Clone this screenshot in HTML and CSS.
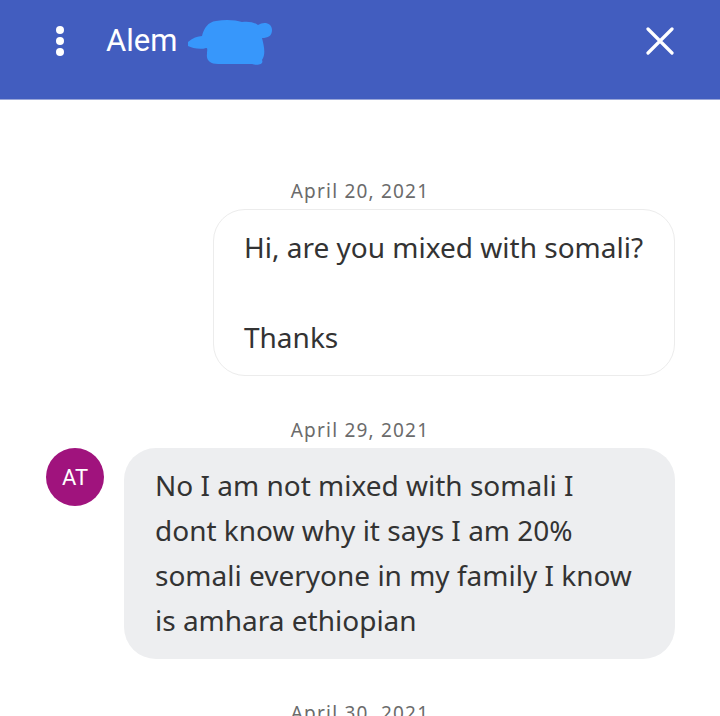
FILE: index.html
```html
<!DOCTYPE html>
<html lang="en">
  <head>
    <meta charset="UTF-8" />
    <meta name="viewport" content="width=device-width, initial-scale=1.0" />
    <title>Conversation</title>
    <link rel="stylesheet" href="styles.css">
  </head>
  <body>
    <header class="top-bar">
      <button class="menu-button" aria-label="More">
        <span class="dot"></span>
        <span class="dot"></span>
        <span class="dot"></span>
      </button>
      <div class="contact-name">
        <span>Alem</span>
        <svg class="scribble" width="90" height="52" viewBox="0 0 90 52">
          <path d="M2 26 C6 22 12 20 16 20 C18 12 22 6 30 5 C40 3 50 4 56 6 C62 5 68 6 72 9 C78 5 86 7 86 14 C86 20 82 22 76 22 C78 30 80 38 76 44 C78 48 72 50 66 48 C56 48 44 48 32 48 C24 48 20 44 21 38 C21 34 22 32 20 32 C14 34 6 32 2 30 Z" fill="#3797fb"/>
        </svg>
      </div>
      <button class="close-button" aria-label="Close">
        <svg width="28" height="28" viewBox="0 0 28 28">
          <path d="M2 2 L26 26 M26 2 L2 26" stroke="#fff" stroke-width="3.2" stroke-linecap="round"/>
        </svg>
      </button>
    </header>

    <main class="thread">
      <section class="day">
        <div class="date">April 20, 2021</div>
        <div class="message outgoing">
          <div class="bubble">Hi, are you mixed with somali?<br><br>Thanks</div>
        </div>
      </section>

      <section class="day">
        <div class="date">April 29, 2021</div>
        <div class="message incoming">
          <div class="avatar">AT</div>
          <div class="bubble">No I am not mixed with somali I dont know why it says I am 20% somali everyone in my family I know is amhara ethiopian</div>
        </div>
      </section>

      <section class="day">
        <div class="date">April 30, 2021</div>
      </section>
    </main>
  </body>
</html>
```

FILE: styles.css
```css
body {
  margin: 0;
  background-color: #ffffff;
  font-family: "Noto Sans", Roboto, sans-serif;
  height: 716px;
  overflow: hidden;
}
.top-bar {
  background-color: #425dbf;
  border-bottom: 1px solid #9aa6d8;
  display: flex;
  align-items: center;
  padding: 0 46px 18px 50px;
  height: 81px;
}
.menu-button {
  background: none;
  border: none;
  padding: 0;
  width: 20px;
  display: flex;
  flex-direction: column;
  align-items: center;
  gap: 3px;
}
.dot {
  width: 8px;
  height: 8px;
  border-radius: 50%;
  background-color: #ffffff;
}
.contact-name {
  position: relative;
  margin-left: 36px;
  color: #ffffff;
  font-family: Roboto, sans-serif;
  font-size: 31px;
  flex: 1;
}
.scribble {
  position: absolute;
  left: 80px;
  top: -6px;
}
.close-button {
  background: none;
  border: none;
  padding: 0;
  width: 28px;
  height: 28px;
}
.thread {
  padding-top: 79px;
}
.day {
  margin-bottom: 42px;
}
.date {
  text-align: center;
  color: #6b6b6b;
  font-size: 19px;
  letter-spacing: 1.2px;
  line-height: 24px;
  margin-bottom: 6px;
}
.message {
  display: flex;
  align-items: flex-start;
  padding: 0 45px 0 46px;
}
.outgoing {
  justify-content: flex-end;
}
.bubble {
  font-size: 28px;
  line-height: 45px;
  color: #333333;
  border-radius: 32px;
  padding: 15px 30px;
}
.outgoing .bubble {
  border: 1px solid #ececec;
  width: 400px;
}
.incoming .bubble {
  background-color: #edeef0;
  margin-left: 20px;
  flex: 1;
  padding: 15px 41px 16px 31px;
}
.avatar {
  width: 58px;
  height: 58px;
  border-radius: 50%;
  background-color: #a0137d;
  color: #ffffff;
  font-family: Roboto, sans-serif;
  font-size: 22px;
  display: flex;
  align-items: center;
  justify-content: center;
  flex-shrink: 0;
}
```
